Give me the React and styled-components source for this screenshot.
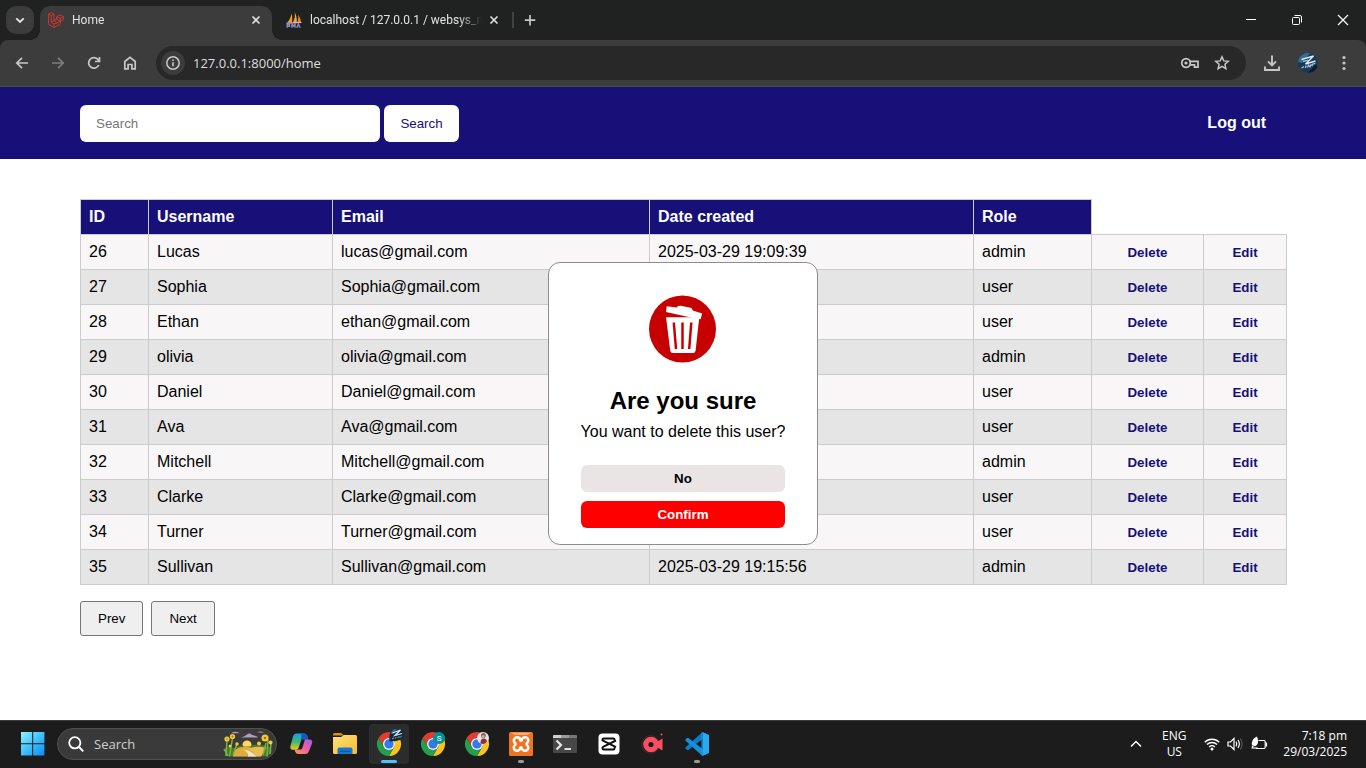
import React from "react";
import styled, { createGlobalStyle, css } from "styled-components";

const navy = "#161078";
const uiFont = '"Open Sans", "Noto Sans", sans-serif';
const pageFont = '"Liberation Sans", Arial, sans-serif';

const GlobalStyle = createGlobalStyle`
  * { box-sizing: border-box; }
  body { margin: 0; background: #fff; }
  button, input { font-family: inherit; }
  svg { display: block; flex: none; }
`;

const Screen = styled.div`
  display: flex;
  flex-direction: column;
  min-height: 100vh;
  font-family: ${pageFont};
`;

/* ---------- browser chrome ---------- */

const TabStrip = styled.div`
  display: flex;
  align-items: flex-start;
  height: 40px;
  padding-left: 6px;
  background: #202221;
  color: #e3e3e3;
  font-family: ${uiFont};
`;

const PlainButton = styled.button`
  display: flex;
  align-items: center;
  justify-content: center;
  padding: 0;
  border: 0;
  background: transparent;
  color: inherit;
`;

const TabSearch = styled(PlainButton)`
  width: 28px;
  height: 28px;
  margin: 6px 6px 0 0;
  border-radius: 10px;
  background: #3c3c3c;
`;

const Tabs = styled.div`
  display: flex;
  gap: 6px;
`;

const Tab = styled.div`
  position: relative;
  display: flex;
  align-items: center;
  width: 232px;
  height: 34px;
  margin-top: 6px;
  padding: 0 8px 6px;
  border-radius: 10px 10px 0 0;
  ${(p) =>
    p.$active &&
    css`
      background: #3c3c3c;
      &::before,
      &::after {
        content: "";
        position: absolute;
        bottom: 0;
        width: 10px;
        height: 10px;
      }
      &::before {
        left: -10px;
        background: radial-gradient(circle at 0 0, transparent 10px, #3c3c3c 10px);
      }
      &::after {
        right: -10px;
        background: radial-gradient(circle at 100% 0, transparent 10px, #3c3c3c 10px);
      }
    `}
`;

const TabTitle = styled.span`
  flex: 1;
  min-width: 0;
  margin: 0 4px 0 8px;
  overflow: hidden;
  white-space: nowrap;
  font-family: Roboto, sans-serif;
  font-size: 12px;
  line-height: 20px;
  mask-image: linear-gradient(to right, #000 calc(100% - 24px), transparent);
`;

const TabClose = styled(PlainButton)`
  width: 16px;
  height: 16px;
`;

const TabDivider = styled.span`
  width: 2px;
  height: 16px;
  margin: 12px 2px 0;
  background: #3f4140;
`;

const NewTab = styled(PlainButton)`
  width: 28px;
  height: 28px;
  margin-top: 6px;
  color: #c7c7c7;
`;

const WindowControls = styled.div`
  display: flex;
  margin-left: auto;
  color: #fff;
`;

const WindowControl = styled(PlainButton)`
  width: 46px;
  height: 40px;
`;

const ToolbarBack = styled.div`
  background: #202221;
`;

const Toolbar = styled.div`
  display: flex;
  align-items: center;
  height: 47px;
  padding: 0 4px;
  border-bottom: 1px solid #4a4a4a;
  border-radius: 8px 8px 0 0;
  background: #3c3c3c;
  color: #c7c7c7;
  font-family: ${uiFont};
`;

const ToolButton = styled(PlainButton)`
  width: 36px;
  height: 34px;
  color: ${(p) => (p.$dim ? "#7d7d7d" : "inherit")};
`;

const Omnibox = styled.div`
  display: flex;
  flex: 1;
  align-items: center;
  height: 34px;
  margin: 0 8px;
  padding: 0 8px 0 5px;
  border-radius: 17px;
  background: #282828;
`;

const SiteInfo = styled(PlainButton)`
  width: 24px;
  height: 24px;
  border-radius: 12px;
  background: #3c3c3c;
`;

const Address = styled.input`
  flex: 1;
  min-width: 0;
  padding: 0 8px;
  border: 0;
  outline: 0;
  background: transparent;
  color: #dedede;
  font-size: 13px;
  line-height: 20px;
`;

const OmniboxAction = styled(PlainButton)`
  width: 32px;
  height: 32px;
`;

/* ---------- web page ---------- */

const Page = styled.div`
  position: relative;
  flex: 1;
  background: #fff;
`;

const Header = styled.header`
  display: flex;
  align-items: center;
  justify-content: space-between;
  height: 72px;
  padding: 0 100px 0 80px;
  background: ${navy};
`;

const SearchForm = styled.form`
  display: flex;
  gap: 4px;
`;

const SearchInput = styled.input`
  width: 300px;
  height: 37px;
  padding: 0 16px;
  border: 0;
  border-radius: 6px;
  background: #fff;
  &::placeholder { color: #757575; }
`;

const SearchButton = styled.button`
  min-width: 75px;
  height: 37px;
  padding: 0 16px;
  border: 0;
  border-radius: 6px;
  background: #fff;
  color: ${navy};
`;

const LogoutLink = styled.a`
  color: #fff;
  font-size: 16px;
  font-weight: bold;
  text-decoration: none;
`;

const Main = styled.main`
  padding: 40px 80px;
`;

const UserTable = styled.table`
  width: 100%;
  table-layout: fixed;
  border-collapse: collapse;
  font-size: 16px;
  line-height: 18px;
`;

const Column = styled.col`
  width: ${(p) => p.$width}px;
`;

const HeadCell = styled.th`
  padding: 8px;
  border: 1px solid #ccc;
  background: ${navy};
  color: #fff;
  text-align: left;
`;

const Row = styled.tr`
  background: #f8f6f7;
  &:nth-child(even) { background: #e5e5e5; }
`;

const Cell = styled.td`
  height: 35px;
  padding: ${(p) => (p.$action ? "0 8px" : "8px")};
  border: 1px solid #ccc;
  text-align: ${(p) => (p.$action ? "center" : "left")};
`;

const RowButton = styled.button`
  padding: 0;
  border: 0;
  background: transparent;
  color: ${navy};
  font-weight: bold;
`;

const Pager = styled.nav`
  display: flex;
  gap: 8px;
  margin-top: 16px;
`;

const PagerButton = styled.button`
  height: 35px;
  padding: 0 17px;
  border: 1px solid #767676;
  border-radius: 3px;
  background: #efefef;
  color: #000;
`;

const DialogLayer = styled.div`
  position: absolute;
  inset: 0;
  display: grid;
  place-items: center;
`;

const Dialog = styled.section`
  display: flex;
  flex-direction: column;
  align-items: center;
  padding: 32px 32px 16px;
  border: 1px solid #8c8c8c;
  border-radius: 12px;
  background: #fff;
`;

const DialogTitle = styled.h2`
  margin: 24px 0 6px;
  font-size: 24px;
  line-height: 28px;
`;

const DialogText = styled.p`
  margin: 0 0 22px;
  font-size: 16px;
  line-height: 22px;
`;

const DialogButtons = styled.div`
  display: flex;
  flex-direction: column;
  gap: 9px;
  width: 100%;
`;

const DialogButton = styled.button`
  height: 27px;
  padding: 0;
  border: 0;
  border-radius: 6px;
  background: ${(p) => (p.$danger ? "#f00" : "#eae4e4")};
  color: ${(p) => (p.$danger ? "#fff" : "#000")};
  font-weight: bold;
`;

/* ---------- taskbar ---------- */

const Taskbar = styled.footer`
  display: flex;
  align-items: center;
  gap: 4px;
  height: 48px;
  padding: 0 19px 0 13px;
  background: #1c1c1c;
  box-shadow: inset 0 1px #3a3a3a;
  color: #fff;
  font-family: ${uiFont};
`;

const TaskButton = styled(PlainButton)`
  position: relative;
  width: 40px;
  height: 40px;
  border-radius: 4px;
  background: ${(p) => (p.$state === "active" ? "#2c2c2c" : "transparent")};
  ${(p) =>
    p.$state &&
    css`
      &::after {
        content: "";
        position: absolute;
        bottom: 1px;
        left: 50%;
        width: ${p.$state === "active" ? 16 : 6}px;
        height: 3px;
        border-radius: 2px;
        background: ${p.$state === "active" ? "#4cc2ff" : "#9a9a9a"};
        transform: translateX(-50%);
      }
    `}
`;

const TaskSearch = styled.label`
  display: flex;
  align-items: center;
  width: 220px;
  height: 32px;
  padding: 0 3px 0 10px;
  border: 1px solid #505050;
  border-radius: 16px;
  background: #3a3a3a;
`;

const TaskSearchInput = styled.input`
  flex: 1;
  min-width: 0;
  padding: 0 10px;
  border: 0;
  outline: 0;
  background: transparent;
  font-size: 13px;
  &::placeholder { color: #d0d0d0; }
`;

const Tray = styled.div`
  display: flex;
  align-items: center;
  margin-left: auto;
  font-size: 12px;
  line-height: 16px;
`;

const TrayButton = styled(PlainButton)`
  width: 24px;
  height: 40px;
`;

const Language = styled(PlainButton)`
  width: 52px;
  margin-right: 4px;
  text-align: center;
  font-size: 12px;
  line-height: 16px;
`;

const Status = styled(PlainButton)`
  gap: 7px;
  height: 40px;
`;

const Clock = styled.time`
  margin-left: 15px;
  text-align: right;
`;

/* ---------- icons ---------- */

const Icon = ({ w = 16, h = w, box = `0 0 ${w} ${h}`, sw = 1.7, children }) => (
  <svg width={w} height={h} viewBox={box} fill="none" stroke="currentColor" strokeWidth={sw} aria-hidden="true">
    {children}
  </svg>
);

const Art = ({ w = 24, h = w, box = `0 0 ${w} ${h}`, children }) => (
  <svg width={w} height={h} viewBox={box} aria-hidden="true">
    {children}
  </svg>
);

const CloseIcon = () => (
  <Icon w={16} sw={1.6}><path d="M4.500 4.500l7 7M11.500 4.500l-7 7" /></Icon>
);

const LaravelIcon = () => (
  <Icon w={16} sw={0.9}>
    <g stroke="#e3342f" strokeLinejoin="round">
      <path d="M.6 2.200L3.300.7 6 2.200v6.400l2.800-1.500V4.600l3.200-1.700 3.300 1.700v3L12.200 9.400v2.900l-6.200 3.200-5.400-3.200z" />
      <path d="M.6 2.200l2.700 1.600L6 2.200M3.300 3.800v6.400L6 8.600M3.300 10.200L6 12.200l6.200-2.800M8.800 4.600l3.400 1.800 3.100-1.800M12.200 6.400v3M8.800 7.100l3.400 2.300M6 12.200v3.300M6 8.600l2.800 1.900" />
    </g>
  </Icon>
);

const SailsIcon = () => (
  <Art w={16}>
    <path d="M5.500 1.500C5 5 3.500 8 1 10.800h4.800C6.600 8 6.400 4.500 5.500 1.500z" fill="#f59a2c" />
    <path d="M8.600 0c.8 4 .2 7.500-2 11h4C11.200 8 10.600 3.500 8.600 0z" fill="#f9a83c" />
    <path d="M12 2.500c1.800 2.600 2.800 5 3 8l-4.200.5C12.300 8.300 12.600 5.500 12 2.500z" fill="#e98322" />
    <path d="M.5 11.300l15-.8" stroke="#d7d5ea" strokeWidth=".9" />
    <path d="M1.200 15.800v-3.600h2.300v2h-2.300M6 15.800v-3.600l1.500 2 1.500-2v3.600M10.800 15.800l1.600-3.600 1.800 3.600" fill="none" stroke="#8d8bc4" strokeWidth="1.400" />
  </Art>
);

const AvatarArt = ({ size = 20 }) => (
  <Art w={size} box="0 0 20 20">
    <circle cx="10" cy="10" r="10" fill="#173a58" />
    <path d="M0 9A10 10 0 0 1 12 .2L4 10z" fill="#2e6f97" />
    <path d="M10 19.500l8-8 1.500 2a10 10 0 0 1-7 6z" fill="#0c1c2c" />
    <path d="M3.500 6.500L15.500 3 7.500 11l10-3" fill="none" stroke="#dbe9f2" strokeWidth="1.500" />
    <path d="M5 8.500l5-1.300M3.500 15.200l2.500-1.700M7.500 15l.6-2.500M9.500 14.500l1-2.500 1.500 1.800 1.200-2.500M14 13.200l.4-2 3-.8" fill="none" stroke="#a9c2d4" strokeWidth="1.300" />
  </Art>
);

const TrashBadge = () => (
  <Art w={67} h={68} box="0 0 67 68">
    <circle cx="33.500" cy="34" r="33.500" fill="#c60000" />
    <path d="M17 22.300h33.300L46.600 55.500q-.3 2.500-2.500 2.500H23.800q-2.200 0-2.600-2.500z" fill="#fff" />
    <path d="M17.700 11.300L28 12.600l.8-1.700 3-.2L42.500 13l1.300 2.600 9.400 3-1.600 5.700-4.100-.6L17 17z" fill="#fff" />
    <path d="M24.800 27.500L27 54M33.500 27.500V54M42.300 27.500L40.200 54" stroke="#c60000" strokeWidth="2.500" />
  </Art>
);

const WindowsLogo = () => (
  <Art w={24}>
    <defs>
      <linearGradient id="win" x1="0" y1="0" x2="1" y2="1">
        <stop offset="0" stopColor="#8df3ff" />
        <stop offset=".5" stopColor="#3fc0fb" />
        <stop offset="1" stopColor="#0c8cf5" />
      </linearGradient>
    </defs>
    <path d="M0 0h11.200v11.200H0zM12.200 0H23.400v11.200H12.200zM0 12.200h11.200v11.200H0zM12.200 12.200h11.200v11.200H12.200z" fill="url(#win)" />
  </Art>
);

const FlowersArt = () => (
  <Art w={50} h={26}>
    <path d="M18 6.500q4-1 6-3 3-2 5 .5 6 1 6 2.500zM8 2.200q3-2 6-1.200l3 1.200zM34 1.200q4-1.500 7 .6z" fill="#b59abb" />
    <path d="M2 17q5-2 9 0 8-4 14-2 8-3 23 1l.5 5q-2 4-7 4.500H8Q3 25 2 22z" fill="#55752a" />
    <path d="M10 25.500q0-9 10-9.500 8-1 10 3l4 6.500z" fill="#e0ab3c" />
    <path d="M25 18q9-4 18-1l-5 8.500h-6q1-5-7-7.500z" fill="#e9bd55" />
    <path d="M20 18.500q9 1 13 7h-8q1-4-5-7z" fill="#f2e2cb" />
    <path d="M19.500 13.500a4.500 4 0 0 1 9 0l-1 2h-7z" fill="#ffd95e" />
    <path d="M3 25L4 9M6.500 25.500L9.500 7M10 24l3.500-10M1 18l4 7M44 25.500l1-17M47 23l1-11M40 24l3-12" stroke="#6fb845" strokeWidth="1.500" fill="none" />
    <g fill="#f4ca38">
      <circle cx="4" cy="8" r="2.600" /><circle cx="9.500" cy="5.500" r="2.600" /><circle cx="14" cy="13" r="1.700" />
      <circle cx="42" cy="7" r="3.500" /><circle cx="36" cy="12.500" r="2" /><circle cx="47.500" cy="11.500" r="2" /><circle cx="7" cy="15" r="1.500" />
    </g>
    <g fill="#a8691a"><circle cx="9.500" cy="5.500" r="1" /><circle cx="42" cy="7" r="1.300" /><circle cx="4" cy="8" r=".8" /></g>
  </Art>
);

const CopilotLogo = () => (
  <Art w={24}>
    <defs>
      <linearGradient id="copA" x1="0" y1="0" x2="0" y2="1">
        <stop offset="0" stopColor="#1d9bea" /><stop offset=".5" stopColor="#3cb878" /><stop offset="1" stopColor="#f5c51a" />
      </linearGradient>
      <linearGradient id="copB" x1="1" y1="0" x2="0" y2="1">
        <stop offset="0" stopColor="#a55bea" /><stop offset=".5" stopColor="#ee5fa0" /><stop offset="1" stopColor="#ff9a4c" />
      </linearGradient>
    </defs>
    <path d="M7.500 1.500H15q2.500 0 3.300 2.500l1 3.500H15q-2.500 0-3.300 2.500l-1.700 5.500q-.8 2.300-2.700 2.300H4q-3.500 0-2.500-4L4 4.500q.9-3 3.500-3z" fill="url(#copA)" />
    <path d="M12.500 1.500H15q2.500 0 3.300 2.500l1 3.500H15q-2 0-3 1.600z" fill="#1757c4" />
    <path d="M16.500 22H9.500Q7 22 6.200 19.500L5.500 17.800h1.800q2.500 0 3.200-2.500L12.200 9.800Q13 7.500 15.200 7.500h5.300q3.500 0 2.500 4L20 19q-.9 3-3.500 3z" fill="url(#copB)" />
    <path d="M9.800 15.500l2.700-8h3.500l-2.700 8.500q-.5 1.500-2 1.500H9z" fill="#1c1c1c" />
  </Art>
);

const FolderIcon = () => (
  <Art w={24}>
    <defs>
      <linearGradient id="fold" x1="0" y1="0" x2="1" y2="1">
        <stop offset="0" stopColor="#ffe07a" /><stop offset="1" stopColor="#f9bb2d" />
      </linearGradient>
    </defs>
    <path d="M0 2.500Q0 1 1.500 1h6q1 0 1.700.8L10.500 3.500H0z" fill="#d6930b" />
    <path d="M0 7V5h7.500q1 0 1.800-.8L10.500 3H22.500Q24 3 24 4.500V20.500Q24 22 22.500 22H1.500Q0 22 0 20.500z" fill="url(#fold)" />
    <path d="M4.500 22v-4.500q0-2 2-2h11q2 0 2 2V22z" fill="#1479cc" />
    <path d="M7 18.800h10v1.200H7z" fill="#0b57a0" />
  </Art>
);

const ChromeLogo = ({ children }) => (
  <Art w={30} box="-3 -3 30 30">
    <path d="M1.600 6A12 12 0 0 1 22.400 6H12A6 6 0 0 0 6.800 15z" fill="#e33b2e" />
    <path d="M22.400 6A12 12 0 0 1 12 24L17.200 15A6 6 0 0 0 12 6z" fill="#fcc31e" />
    <path d="M1.600 6L6.800 15A6 6 0 0 0 17.200 15L12 24A12 12 0 0 1 1.600 6z" fill="#22a04a" />
    <circle cx="12" cy="12" r="6" fill="#fff" />
    <circle cx="12" cy="12" r="4.700" fill="#3579ea" />
    {children}
  </Art>
);

const ChromeSilver = () => (
  <ChromeLogo>
    <path d="M12.500 9.500Q11-3 20-4.500q7 0 7 7.500-2 7-14.500 6.500z" fill="#13293c" />
    <path d="M13.500 2q1.500-6 7.500-6l-5 6z" fill="#2a6388" />
    <path d="M15.500 1l8-3-5.500 5.500 7-2" fill="none" stroke="#dbe9f2" strokeWidth="1.300" />
    <path d="M15 7l2-1.200M18.500 6.500l.5-1.500M20.500 6l1.500-1.500 1 1 1.500-1.500" fill="none" stroke="#8fa9ba" strokeWidth="1" />
  </ChromeLogo>
);

const ChromeS = () => (
  <ChromeLogo>
    <circle cx="18" cy="6" r="6" fill="#00929b" />
    <text x="18" y="8.800" textAnchor="middle" fontSize="8" fontFamily="Roboto, sans-serif" fill="#fff">S</text>
  </ChromeLogo>
);

const ChromePhoto = () => (
  <ChromeLogo>
    <circle cx="18" cy="6" r="6" fill="#e6e4e4" />
    <path d="M16 3.500q0-2.500 2.500-2.500t2.300 3l-1 2h-3z" fill="#6f625e" />
    <path d="M15.500 11q0-4.500 3-4.500t3.500 3q-1.500 2.500-4 2.500-1.500 0-2.500-1z" fill="#8e2f3a" />
    <circle cx="18.300" cy="4.500" r="1.400" fill="#d6b09c" />
  </ChromeLogo>
);

const XamppIcon = () => (
  <Art w={24}>
    <rect width="24" height="24" rx="1.500" fill="#f0741f" />
    <path d="M2 .8h20l-4 2H6z" fill="#f9b98a" />
    <path d="M8 5.300a3.300 3.300 0 0 1 3.300 3q.7.600 1.400 0a3.300 3.300 0 1 1 5 3v1.400a3.300 3.300 0 1 1-5 3q-.7-.6-1.400 0a3.300 3.300 0 1 1-5-3v-1.400A3.300 3.300 0 0 1 8 5.300z" fill="none" stroke="#fff" strokeWidth="2.500" />
  </Art>
);

const TerminalIcon = () => (
  <Art w={24}>
    <rect y="3" width="24" height="18" rx="1" fill="#474747" />
    <path d="M1 3h7v3H0V4q0-1 1-1z" fill="#cfcfcf" />
    <path d="M8 3h8v3H8z" fill="#9b9b9b" />
    <path d="M16 3h7q1 0 1 1v2h-8z" fill="#777" />
    <path d="M3.500 8.500l4.500 4.500-4.500 4.500" fill="none" stroke="#e6e6e6" strokeWidth="2.200" />
    <path d="M11.500 17h6.500" stroke="#f2f2f2" strokeWidth="1.800" />
  </Art>
);

const CapcutIcon = () => (
  <Art w={24}>
    <rect x="1.500" y="1.500" width="21" height="21" rx="4" fill="#fff" />
    <path d="M17.500 9V7.700q0-1.200-1.200-1.200H6.700q-1.200 0-1.200 1.200v.8l13.500 6.700M5.500 15v1.300q0 1.200 1.200 1.200h9.600q1.200 0 1.200-1.200v-.8M5.500 15.200l13.500-6.700" fill="none" stroke="#111" strokeWidth="2" />
  </Art>
);

const RecorderIcon = () => (
  <Art w={24}>
    <circle cx="9.500" cy="12.500" r="8.800" fill="none" stroke="#4a2a2e" />
    <circle cx="10" cy="12.500" r="7.800" fill="#fb4f61" />
    <path d="M15 10.500L21.500 6.500V18.500L15 14.500z" fill="#fb4f61" />
    <circle cx="10" cy="12.500" r="2.600" fill="#1c1c1c" />
    <circle cx="20.500" cy="2.500" r="1" fill="#fb4f61" />
  </Art>
);

const VsCodeIcon = () => (
  <Art w={24}>
    <path d="M17.500 0L24 3V21L17.500 24z" fill="#29a9f2" />
    <path d="M17.500 0L.6 15.300Q0 16 .6 16.600L2 17.900Q2.600 18.300 3.300 17.900L18 6.700z" fill="#0b7ccb" />
    <path d="M17.500 24L.6 8.700Q0 8 .6 7.400L2 6.100Q2.600 5.700 3.300 6.100L18 17.300z" fill="#1590df" />
    <path d="M17.500 24q-1 0-1-1V1q0-1 1-1v24z" fill="#1c97e6" />
  </Art>
);

/* ---------- data ---------- */

const columnWidths = [68, 184, 317, 324, 118, 112, 83];
const headings = ["ID", "Username", "Email", "Date created", "Role"];
const users = [
  [26, "Lucas", "lucas@gmail.com", "2025-03-29 19:09:39", "admin"],
  [27, "Sophia", "Sophia@gmail.com", "", "user"],
  [28, "Ethan", "ethan@gmail.com", "", "user"],
  [29, "olivia", "olivia@gmail.com", "", "admin"],
  [30, "Daniel", "Daniel@gmail.com", "", "user"],
  [31, "Ava", "Ava@gmail.com", "", "user"],
  [32, "Mitchell", "Mitchell@gmail.com", "", "admin"],
  [33, "Clarke", "Clarke@gmail.com", "", "user"],
  [34, "Turner", "Turner@gmail.com", "", "user"],
  [35, "Sullivan", "Sullivan@gmail.com", "2025-03-29 19:15:56", "admin"],
];

const apps = [
  ["Copilot", CopilotLogo],
  ["File Explorer", FolderIcon],
  ["Chrome", ChromeSilver, "active"],
  ["Chrome, profile S", ChromeS],
  ["Chrome, profile photo", ChromePhoto],
  ["XAMPP", XamppIcon, "running"],
  ["Terminal", TerminalIcon],
  ["CapCut", CapcutIcon],
  ["Recorder", RecorderIcon],
  ["Visual Studio Code", VsCodeIcon, "running"],
];

/* ---------- sections ---------- */

const BrowserChrome = () => (
  <>
    <TabStrip>
      <TabSearch aria-label="Search tabs">
        <Icon w={16} sw={1.9}><path d="M4.300 6.300L8 10l3.700-3.700" /></Icon>
      </TabSearch>
      <Tabs>
        <Tab $active>
          <LaravelIcon />
          <TabTitle>Home</TabTitle>
          <TabClose aria-label="Close tab"><CloseIcon /></TabClose>
        </Tab>
        <Tab>
          <SailsIcon />
          <TabTitle>localhost / 127.0.0.1 / websys_m</TabTitle>
          <TabClose aria-label="Close tab"><CloseIcon /></TabClose>
        </Tab>
      </Tabs>
      <TabDivider />
      <NewTab aria-label="New tab">
        <Icon w={16}><path d="M8 3v10.500M2.800 8.200h10.500" /></Icon>
      </NewTab>
      <WindowControls>
        <WindowControl aria-label="Minimize">
          <Icon w={12} sw={1}><path d="M1 5.500h10" /></Icon>
        </WindowControl>
        <WindowControl aria-label="Restore">
          <Icon w={12} sw={1}>
            <rect x="1.500" y="3.500" width="7" height="7" rx="1" />
            <path d="M3.500 1.500H9q1.500 0 1.500 1.500v5.500" />
          </Icon>
        </WindowControl>
        <WindowControl aria-label="Close">
          <Icon w={12} sw={1.2}><path d="M1 1l10 10M11 1L1 11" /></Icon>
        </WindowControl>
      </WindowControls>
    </TabStrip>
    <ToolbarBack>
      <Toolbar>
        <ToolButton aria-label="Back"><Icon><path d="M14 8H3M8 2.800L2.800 8 8 13.200" /></Icon></ToolButton>
        <ToolButton aria-label="Forward" $dim><Icon><path d="M2 8h11M8 2.800L13.200 8 8 13.200" /></Icon></ToolButton>
        <ToolButton aria-label="Reload">
          <Icon><path d="M12.800 10a5.300 5.300 0 1 1-.7-5.400L13.300 6M13.500 2v4.500H9" /></Icon>
        </ToolButton>
        <ToolButton aria-label="Home page">
          <Icon><path d="M2.800 6.500L8 2.300l5.200 4.200v7.300H9.900V9.500H6.100v4.300H2.800z" /></Icon>
        </ToolButton>
        <Omnibox>
          <SiteInfo aria-label="Site information">
            <Icon w={16} sw={1.5}>
              <circle cx="8" cy="8" r="6.200" />
              <path d="M8 7.300v4M8 4.500v1.600" strokeWidth="1.600" />
            </Icon>
          </SiteInfo>
          <Address aria-label="Address" defaultValue="127.0.0.1:8000/home" />
          <OmniboxAction aria-label="Passwords">
            <Icon w={20} h={16} sw={1.700}>
              <circle cx="6" cy="8" r="4.300" />
              <circle cx="6" cy="8" r="1.600" fill="currentColor" stroke="none" />
              <path d="M10 6.300h8v5.800h-3.500V9.800H10" />
            </Icon>
          </OmniboxAction>
          <OmniboxAction aria-label="Bookmark">
            <Icon w={16} sw={1.5}>
              <path d="M8 1.800l1.800 4.100 4.500.4-3.400 3 1 4.400L8 11.400l-3.900 2.300 1-4.400-3.400-3 4.500-.4z" />
            </Icon>
          </OmniboxAction>
        </Omnibox>
        <ToolButton aria-label="Downloads">
          <Icon w={16} sw={1.9}><path d="M8 .5v9.500M4 6.300l4 4 4-4M1 11.500V15h14v-3.500" /></Icon>
        </ToolButton>
        <ToolButton aria-label="Profile"><AvatarArt /></ToolButton>
        <ToolButton aria-label="Menu">
          <Icon w={4} h={16}>
            <g fill="currentColor" stroke="none">
              <circle cx="2" cy="2.500" r="1.600" /><circle cx="2" cy="8" r="1.600" /><circle cx="2" cy="13.500" r="1.600" />
            </g>
          </Icon>
        </ToolButton>
      </Toolbar>
    </ToolbarBack>
  </>
);

const UserPage = () => (
  <Page>
    <Header>
      <SearchForm onSubmit={(e) => e.preventDefault()}>
        <SearchInput aria-label="Search" placeholder="Search" />
        <SearchButton>Search</SearchButton>
      </SearchForm>
      <LogoutLink href="#">Log out</LogoutLink>
    </Header>
    <Main>
      <UserTable>
        <colgroup>
          {columnWidths.map((w, i) => <Column key={i} $width={w} />)}
        </colgroup>
        <thead>
          <tr>{headings.map((h) => <HeadCell key={h} scope="col">{h}</HeadCell>)}</tr>
        </thead>
        <tbody>
          {users.map((user) => (
            <Row key={user[0]}>
              {user.map((value, i) => <Cell key={i}>{value}</Cell>)}
              <Cell $action><RowButton>Delete</RowButton></Cell>
              <Cell $action><RowButton>Edit</RowButton></Cell>
            </Row>
          ))}
        </tbody>
      </UserTable>
      <Pager aria-label="Pages">
        <PagerButton>Prev</PagerButton>
        <PagerButton>Next</PagerButton>
      </Pager>
    </Main>
    <DialogLayer>
      <Dialog role="dialog" aria-labelledby="confirm-title">
        <TrashBadge />
        <DialogTitle id="confirm-title">Are you sure</DialogTitle>
        <DialogText>You want to delete this user?</DialogText>
        <DialogButtons>
          <DialogButton>No</DialogButton>
          <DialogButton $danger>Confirm</DialogButton>
        </DialogButtons>
      </Dialog>
    </DialogLayer>
  </Page>
);

const DesktopTaskbar = () => (
  <Taskbar>
    <TaskButton aria-label="Start"><WindowsLogo /></TaskButton>
    <TaskSearch>
      <Icon w={16} sw={1.800}><circle cx="6.800" cy="6.800" r="5.600" /><path d="M11 11l4.300 4.300" /></Icon>
      <TaskSearchInput aria-label="Search Windows" placeholder="Search" />
      <FlowersArt />
    </TaskSearch>
    {apps.map(([name, Logo, state]) => (
      <TaskButton key={name} aria-label={name} $state={state}><Logo /></TaskButton>
    ))}
    <Tray>
      <TrayButton aria-label="Hidden icons">
        <Icon w={12} sw={1.500}><path d="M1 8.500l5-5 5 5" /></Icon>
      </TrayButton>
      <Language>ENG<br />US</Language>
      <Status aria-label="Network, volume and battery">
        <Icon w={16} sw={1.400}>
          <path d="M.8 6.200a10.200 10.200 0 0 1 14.400 0M3 8.600a7 7 0 0 1 10 0M5.200 10.900a4 4 0 0 1 5.600 0" />
          <circle cx="8" cy="13" r="1.500" fill="currentColor" stroke="none" />
        </Icon>
        <Icon w={16} sw={1.200}>
          <path d="M1 6h2.500l3.500-3.500v11L3.500 10H1zM9 5.700q1.500 2.300 0 4.600M11 4q2.700 4 0 8" />
          <path d="M13.300 2.500q3.500 5.500 0 11" stroke="#555" />
        </Icon>
        <Icon w={18} h={16} sw={1.200}>
          <path d="M8.500 4.500H14q1.200 0 1.200 1.200v5.600q0 1.200-1.200 1.200H6" />
          <path d="M15.500 7h1v3h-1" />
          <path d="M7 .5Q1 3 2 9.500q3.500 2 5.500-1.500Q8.800 5 7 .5zM2 9l2 1-2.500 3z" fill="currentColor" stroke="none" />
          <path d="M2 12h5.500" />
        </Icon>
      </Status>
      <Clock>7:18 pm<br />29/03/2025</Clock>
    </Tray>
  </Taskbar>
);

export default function App() {
  return (
    <Screen>
      <GlobalStyle />
      <BrowserChrome />
      <UserPage />
      <DesktopTaskbar />
    </Screen>
  );
}
